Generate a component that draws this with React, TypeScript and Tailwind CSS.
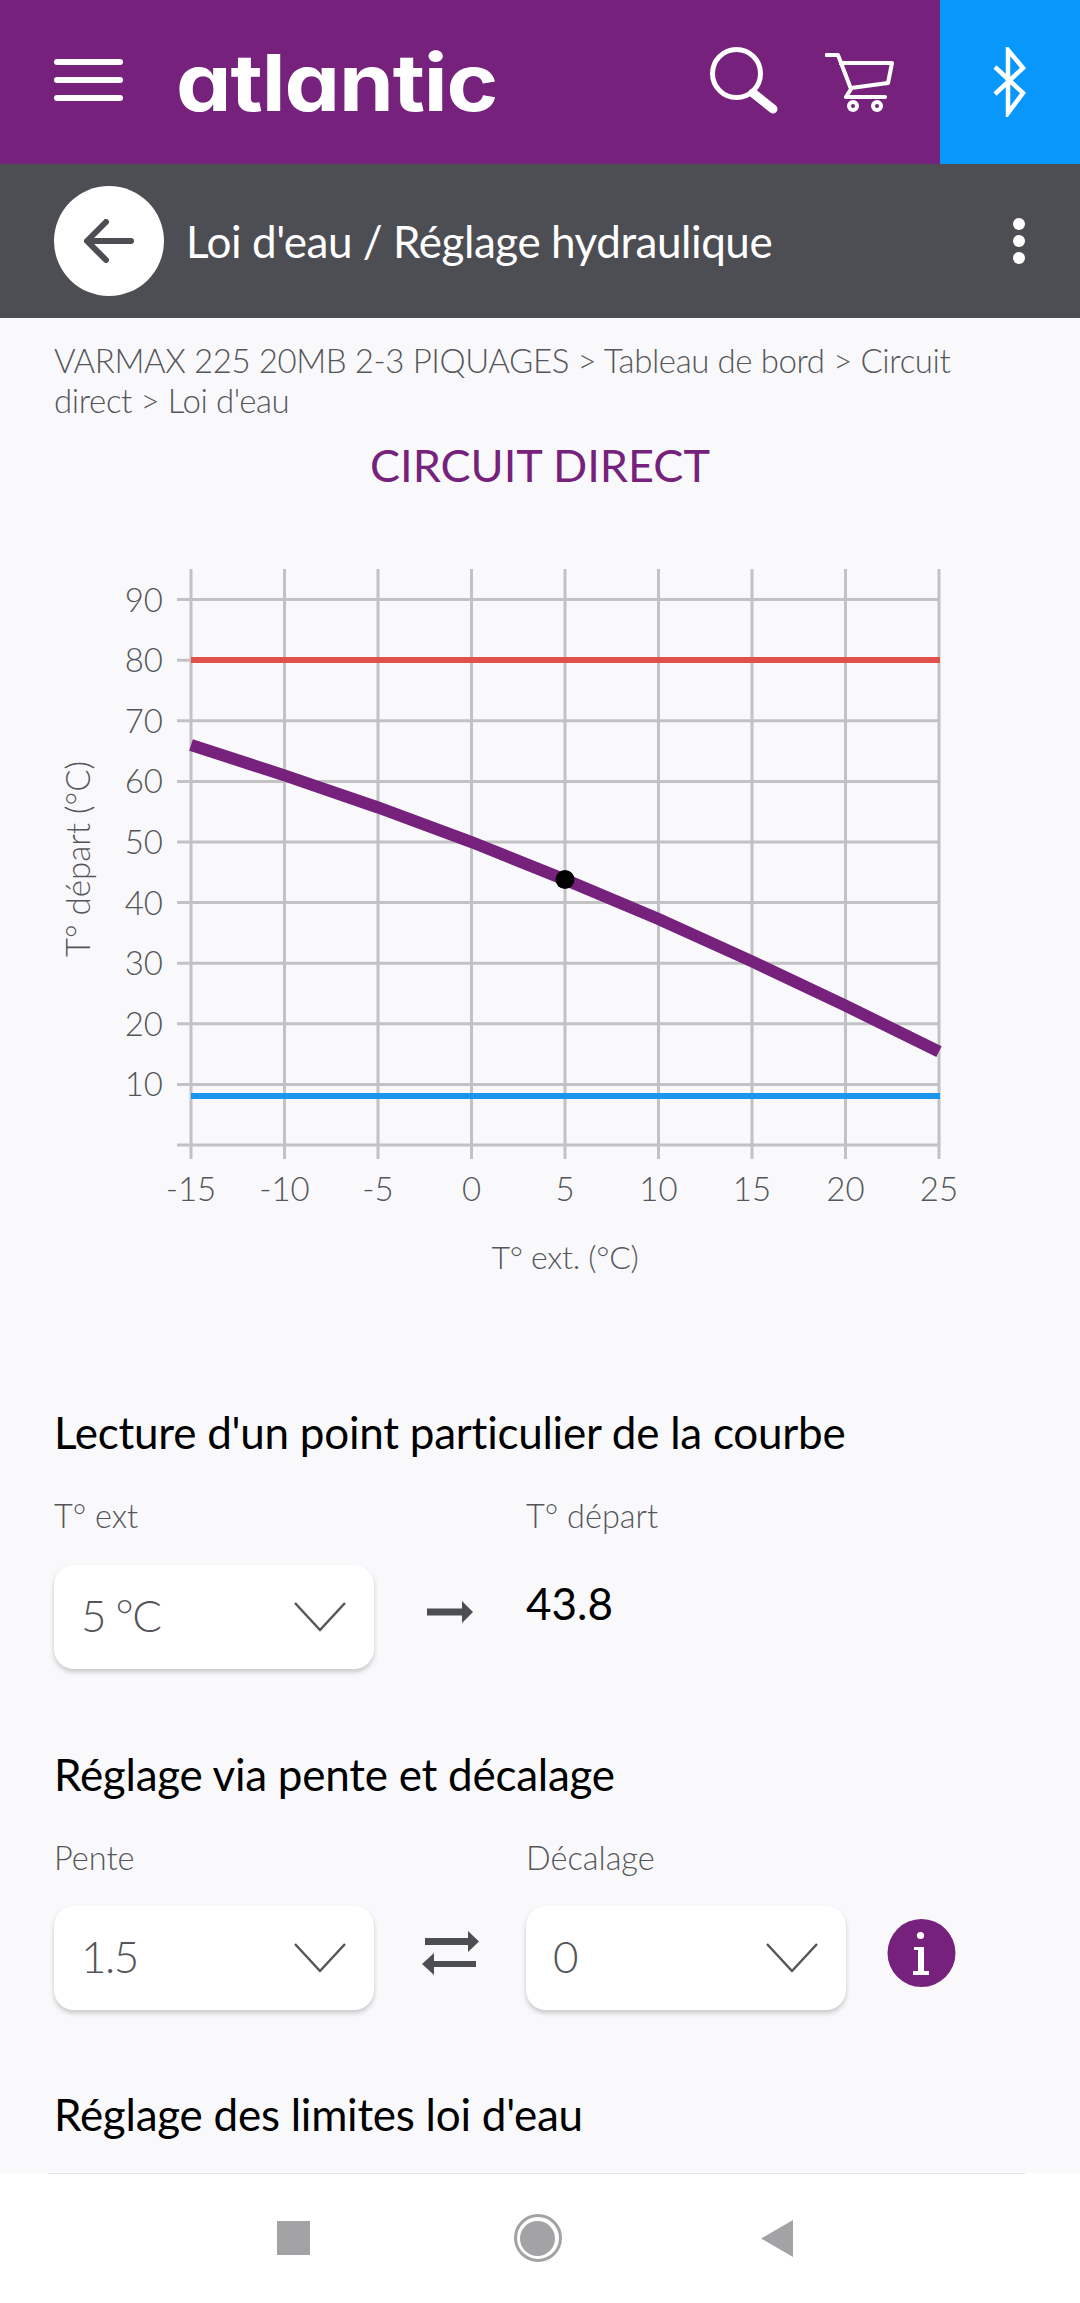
import React from 'react';

const purple = '#76227d';

const xTicks = [-15, -10, -5, 0, 5, 10, 15, 20, 25];
const yTicks = [90, 80, 70, 60, 50, 40, 30, 20, 10];
const xOf = (v: number) => 191 + ((v + 15) / 40) * 748;
const yOf = (v: number) => 1146 - (v / 10) * 60.6;

const curve = [
  [-15, 66],
  [-10, 61],
  [-5, 55.7],
  [0, 50],
  [5, 43.8],
  [10, 37.3],
  [15, 30.3],
  [20, 23],
  [25, 15.4],
];

const LawChart = () => (
  <svg width="1080" height="760" viewBox="0 540 1080 760" className="block" style={{ fontFamily: 'Lato, sans-serif' }}>
    {xTicks.map((t) => (
      <line key={t} x1={xOf(t)} x2={xOf(t)} y1={570} y2={1160} stroke="#c2c2c4" strokeWidth="3" />
    ))}
    {[...yTicks, 0].map((t) => (
      <line key={t} x1={177} x2={940} y1={yOf(t)} y2={yOf(t)} stroke="#c2c2c4" strokeWidth="3" />
    ))}
    <line x1={191} x2={940} y1={661} y2={661} stroke="#e2504a" strokeWidth="6" />
    <line x1={191} x2={940} y1={1097} y2={1097} stroke="#1a96ee" strokeWidth="6" />
    <polyline
      points={curve.map(([x, y]) => `${xOf(x)},${yOf(y)}`).join(' ')}
      fill="none"
      stroke={purple}
      strokeWidth="12"
    />
    <circle cx={xOf(5)} cy={yOf(43.8)} r="9.5" fill="#000" />
    {yTicks.map((t) => (
      <text key={t} x={163} y={yOf(t) + 12} textAnchor="end" fontSize="33" fontWeight="300" fill="#55565a">
        {t}
      </text>
    ))}
    {xTicks.map((t) => (
      <text key={t} x={xOf(t)} y={1202} textAnchor="middle" fontSize="33" fontWeight="300" fill="#55565a">
        {t}
      </text>
    ))}
    <text x={565} y={1270} textAnchor="middle" fontSize="32" fontWeight="300" letterSpacing="-0.3" fill="#55565a">
      T° ext. (°C)
    </text>
    <text
      transform="translate(90 860) rotate(-90)"
      textAnchor="middle"
      fontSize="33"
      fontWeight="300"
      fill="#55565a"
    >
      T° départ (°C)
    </text>
  </svg>
);

const Chevron = () => (
  <svg width="52" height="30" viewBox="0 0 52 30" fill="none" stroke="#55565a" strokeWidth="2.5">
    <path d="M1 1 L26 28 L51 1" />
  </svg>
);

const SelectBox = ({ value }: { value: string }) => (
  <div className="flex h-[104px] w-[320px] items-center justify-between rounded-[20px] bg-white pr-7 pl-[27px] shadow-[0_3px_5px_rgba(0,0,0,0.2)]">
    <span className="pb-[5px] text-[44px] font-light tracking-[-1.5px] text-[#55565a]">{value}</span>
    <Chevron />
  </div>
);

const Label = ({ children }: { children: React.ReactNode }) => (
  <div className="h-[40px] text-[32.5px] leading-[40px] font-light text-[#55565a]">{children}</div>
);

const Heading = ({ children }: { children: React.ReactNode }) => (
  <h2 className="text-[44px] leading-[50px] font-normal tracking-[-0.25px] text-black">{children}</h2>
);

export default function App() {
  return (
    <div className="flex h-[2303px] w-[1080px] flex-col overflow-hidden bg-[#f9f9fb] font-['Lato',sans-serif]">
      <header className="flex h-[164px] shrink-0 bg-[#76227d]">
        <div className="flex flex-1 items-center pl-[54px]">
          <div className="mb-[4px] flex w-[69px] flex-col gap-[12px]">
            <span className="h-[6px] rounded-full bg-white" />
            <span className="h-[6px] rounded-full bg-white" />
            <span className="h-[6px] rounded-full bg-white" />
          </div>
          <span className="ml-[53px] origin-left scale-x-[1.115] font-['Inter',sans-serif] text-[79px] leading-none font-bold tracking-[-1px] text-white [font-feature-settings:'cv11']">
            atlantic
          </span>
          <svg className="ml-auto" width="70" height="70" viewBox="0 0 70 70" fill="none" stroke="#fff">
            <circle cx="26.5" cy="26.5" r="24" strokeWidth="5" />
            <path d="M43 46 L63 62" strokeWidth="9" strokeLinecap="round" />
          </svg>
          <svg className="mr-[46px] ml-[45px]" width="69" height="60" viewBox="0 0 69 60" fill="none" stroke="#fff" strokeWidth="4">
            <path d="M1.5 3 H13 L26 37 L21 45 H60" strokeLinecap="round" strokeLinejoin="round" />
            <path d="M14 11 H67 L63 31 L26 36" strokeLinejoin="round" />
            <circle cx="28" cy="54" r="4" />
            <circle cx="52" cy="54" r="4" />
          </svg>
        </div>
        <div className="flex w-[140px] items-center justify-center bg-[#0898fb]">
          <svg width="34" height="70" viewBox="0 0 34 70" fill="none" stroke="#fff" strokeWidth="4.5">
            <path d="M2 20 L30 46 L15 66 V3 L30 21 L2 47" />
          </svg>
        </div>
      </header>

      <div className="flex h-[154px] shrink-0 items-center bg-[#4d4e54] pl-[54px]">
        <div className="flex h-[110px] w-[110px] items-center justify-center rounded-full bg-white">
          <svg width="50" height="44" viewBox="0 0 50 44" fill="none" stroke="#4d4e54" strokeWidth="6" strokeLinecap="round" strokeLinejoin="round">
            <path d="M47 22 H4 M22 3 L3 22 L22 41" />
          </svg>
        </div>
        <h1 className="ml-[22px] text-[44px] font-normal tracking-[-0.45px] text-white">Loi d'eau / Réglage hydraulique</h1>
        <div className="mr-[55px] ml-auto flex flex-col gap-[5px]">
          <span className="h-[12px] w-[12px] rounded-full bg-white" />
          <span className="h-[12px] w-[12px] rounded-full bg-white" />
          <span className="h-[12px] w-[12px] rounded-full bg-white" />
        </div>
      </div>

      <main className="min-h-0 flex-1 overflow-hidden">
        <p className="mt-[22px] px-[54px] text-[33px] leading-[40px] font-light tracking-[-0.4px] text-[#55565a]">
          VARMAX 225 20MB 2-3 PIQUAGES &gt; Tableau de bord &gt; Circuit direct &gt; Loi d'eau
        </p>
        <div className="mt-[19px] text-center text-[45px] leading-[52px] font-normal text-[#76227d]">CIRCUIT DIRECT</div>

        <div className="mt-[48px]">
          <LawChart />
        </div>

        <section className="mt-[108px] px-[54px]">
          <Heading>Lecture d'un point particulier de la courbe</Heading>
          <div className="mt-[39px] flex">
            <div>
              <Label>T° ext</Label>
              <div className="mt-[29px]">
                <SelectBox value="5 °C" />
              </div>
            </div>
            <div className="flex w-[152px] justify-center pt-[105px]">
              <svg width="46" height="22" viewBox="0 0 46 22" fill="#4d4e54">
                <path d="M0 7.5 H35 V0 L46 11 L35 22 V14.5 H0 Z" />
              </svg>
            </div>
            <div>
              <Label>T° départ</Label>
              <div className="mt-[42px] text-[44px] leading-[50px] font-normal text-black">43.8</div>
            </div>
          </div>
        </section>

        <section className="mt-[80px] px-[54px]">
          <Heading>Réglage via pente et décalage</Heading>
          <div className="mt-[39px] flex">
            <div>
              <Label>Pente</Label>
              <div className="mt-[28px]">
                <SelectBox value="1.5" />
              </div>
            </div>
            <div className="flex w-[152px] justify-center pt-[93px]">
              <svg width="57" height="44" viewBox="0 0 57 44" fill="#4d4e54">
                <path d="M3 7 H46 V0 L57 10.5 L46 21 V14 H3 Z" />
                <path d="M54 30 H12 V22 L0 33 L12 44 V36 H54 Z" />
              </svg>
            </div>
            <div>
              <Label>Décalage</Label>
              <div className="mt-[28px]">
                <SelectBox value="0" />
              </div>
            </div>
            <svg className="mt-[81px] ml-[41px]" width="69" height="68" viewBox="0 0 69 68">
              <circle cx="34.5" cy="34" r="34" fill={purple} />
              <circle cx="33.5" cy="16.5" r="3.6" fill="#fff" />
              <path d="M27 28 H37 V52 H42 V56 H26 V52 H31 V31 H27 Z" fill="#fff" />
            </svg>
          </div>
        </section>

        <section className="mt-[79px] px-[54px]">
          <Heading>Réglage des limites loi d'eau</Heading>
        </section>
      </main>

      <nav className="relative flex h-[130px] shrink-0 items-center justify-center bg-white pr-[11px]">
        <div className="absolute top-0 right-[55px] left-[48px] h-[1px] bg-[#e4e4e6]" />
        <div className="flex items-center">
          <span className="mr-[204px] h-[34px] w-[33px] bg-[#a3a3a5]" />
          <span className="mr-[199px] flex h-[48px] w-[48px] items-center justify-center rounded-full border-[3px] border-[#a3a3a5]">
            <span className="h-[35px] w-[35px] rounded-full bg-[#a3a3a5]" />
          </span>
          <svg width="32" height="37" viewBox="0 0 32 37" fill="#a3a3a5">
            <path d="M0 18.5 L32 0 V37 Z" />
          </svg>
        </div>
      </nav>
    </div>
  );
}
